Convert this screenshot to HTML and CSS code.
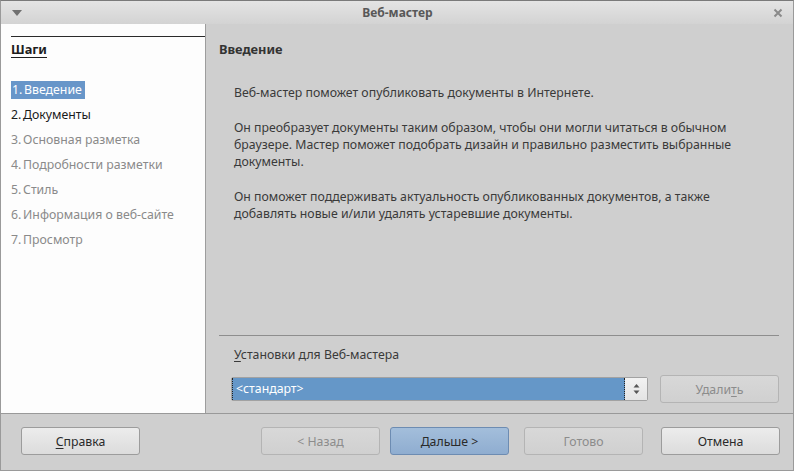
FILE: index.html
```html
<!DOCTYPE html>
<html lang="ru">
<head>
<meta charset="utf-8">
<link rel="stylesheet" href="styles.css">
</head>
<body>
<div class="window">
  <div class="titlebar">
    <svg class="menu-arrow" width="10" height="6" viewBox="0 0 10 6"><path d="M0 0h10L5 6z" fill="#707070"/></svg>
    <div class="title">Веб-мастер</div>
    <svg class="close" width="10" height="10" viewBox="0 0 10 10"><path d="M1.5 1.5l7 7M8.5 1.5l-7 7" stroke="#8a8a8a" stroke-width="2"/></svg>
  </div>
  <div class="body">
    <div class="steps">
      <div class="steps-head"><span>Шаги</span></div>
      <ul class="step-list">
        <li class="step"><span class="sel"><span class="num">1. </span>Введение</span></li>
        <li class="step active"><span class="num">2. </span>Документы</li>
        <li class="step"><span class="num">3. </span>Основная разметка</li>
        <li class="step"><span class="num">4. </span>Подробности разметки</li>
        <li class="step"><span class="num">5. </span>Стиль</li>
        <li class="step"><span class="num">6. </span>Информация о веб-сайте</li>
        <li class="step"><span class="num">7. </span>Просмотр</li>
      </ul>
    </div>
    <div class="main">
      <h1 class="heading">Введение</h1>
      <div class="text">
        <p>Веб-мастер поможет опубликовать документы в Интернете.</p>
        <p>Он преобразует документы таким образом, чтобы они могли читаться в обычном браузере. Мастер поможет подобрать дизайн и правильно разместить выбранные документы.</p>
        <p>Он поможет поддерживать актуальность опубликованных документов, а также добавлять новые и/или удалять устаревшие документы.</p>
      </div>
      <div class="settings">
        <div class="label"><u>У</u>становки для Веб-мастера</div>
        <div class="settings-row">
          <div class="combo">
            <div class="combo-value">&lt;стандарт&gt;</div>
            <div class="spin">
              <svg width="7" height="14" viewBox="0 0 7 14"><path d="M0.5 5.5L3.5 2l3 3.5z" fill="#555"/><path d="M0.5 8.5L3.5 12l3-3.5z" fill="#555"/></svg>
            </div>
          </div>
          <div class="btn disabled">Удали<u>т</u>ь</div>
        </div>
      </div>
    </div>
  </div>
  <div class="footer">
    <div class="btn"><u>С</u>правка</div>
    <div class="nav">
      <div class="btn disabled">&lt; Назад</div>
      <div class="btn primary">Дальше &gt;</div>
      <div class="btn disabled">Готово</div>
      <div class="btn cancel">Отмена</div>
    </div>
  </div>
</div>
</body>
</html>
```
FILE: styles.css
```css
* { box-sizing: border-box; margin: 0; padding: 0; }
html, body { width: 794px; height: 471px; overflow: hidden; }
body {
  font-family: "Noto Sans", "Open Sans", sans-serif;
  font-size: 12.3px;
  color: #3c3c3c;
  background: #cfcfcf;
}
.window {
  width: 794px;
  height: 471px;
  display: flex;
  flex-direction: column;
  border: 1px solid #9a9a9a;
  border-top-color: #7a7a7a;
  background: #cfcfcf;
}
.titlebar {
  height: 23px;
  flex: none;
  display: flex;
  align-items: center;
  padding: 0 10px 0 11px;
  background: linear-gradient(#e4e4e4, #d3d3d3);
}
.title {
  flex: 1;
  text-align: center;
  font-weight: bold;
  font-size: 12px;
  color: #585858;
}
.body {
  flex: 1;
  display: flex;
  min-height: 0;
}
.steps {
  width: 205px;
  flex: none;
  background: #fdfdfd;
  border-right: 1px solid #9d9d9d;
  padding: 12px 0 0 10px;
}
.steps-head {
  border-top: 1px solid #2a2a2a;
  padding-top: 4px;
  height: 45px;
}
.steps-head span {
  font-weight: bold;
  color: #1e1e1e;
  text-decoration: underline;
  text-underline-offset: 3px;
  line-height: 17px;
  font-size: 12.8px;
}
.step-list { list-style: none; }
.step {
  height: 25px;
  line-height: 18px;
  color: #8a8a8a;
  white-space: nowrap;
}
.num { word-spacing: -1.5px; }
.sel {
  display: inline-block;
  padding: 0 3px 0 1px;
  background: #6896c9;
  color: #fff;
}
.step.active { color: #1a1a1a; }
.main {
  flex: 1;
  display: flex;
  flex-direction: column;
  padding: 16px 14px 0 13px;
}
.heading {
  font-size: 12.8px;
  font-weight: bold;
  color: #333;
  line-height: 18px;
}
.text {
  padding: 26px 0 0 15px;
  flex: 1;
  line-height: 17px;
  color: #3a3a3a;
}
.text p { margin-bottom: 18px; width: 520px; }
.settings {
  border-top: 1px solid #8e8e8e;
  padding: 10px 0 13px 12px;
  height: 78px;
}
.label { line-height: 17px; padding-left: 3px; color: #3a3a3a; }
.label u, .btn u { text-underline-offset: 2px; }
.settings-row {
  display: flex;
  align-items: center;
  gap: 12px;
  margin-top: 12px;
}
.combo {
  width: 417px;
  height: 24px;
  display: flex;
  border: 1px solid #a2a2a2;
  border-radius: 2px;
  background: #f0f0f0;
}
.combo-value {
  flex: 1;
  background: #6597c8;
  color: #fff;
  padding-left: 3px;
  line-height: 22px;
  border-right: 1px dotted #222;
  border-left: 1px dotted #222;
}
.spin {
  width: 22px;
  display: flex;
  align-items: center;
  justify-content: center;
  background: linear-gradient(#f2f2f2, #e4e4e4);
}
.btn {
  width: 119px;
  height: 28px;
  display: flex;
  align-items: center;
  justify-content: center;
  border: 1px solid #9c9c9c;
  border-radius: 3px;
  background: linear-gradient(#ececec, #dcdcdc);
  color: #2a2a2a;
}
.btn.disabled {
  color: #8c8c8c;
  border-color: #b4b4b4;
  background: linear-gradient(#d8d8d8, #d0d0d0);
}
.btn.primary {
  border-color: #6d8cb2;
  background: linear-gradient(#a3bedb, #8fadd0);
  color: #2a2a2a;
}
.footer {
  height: 57px;
  flex: none;
  border-top: 1px solid #999;
  display: flex;
  justify-content: space-between;
  align-items: flex-start;
  padding: 13px 13px 0 20px;
}
.nav { display: flex; gap: 10px; }
.nav .btn:nth-child(3) { margin-left: 5px; }
.nav .btn.cancel { margin-left: 8px; }
```
